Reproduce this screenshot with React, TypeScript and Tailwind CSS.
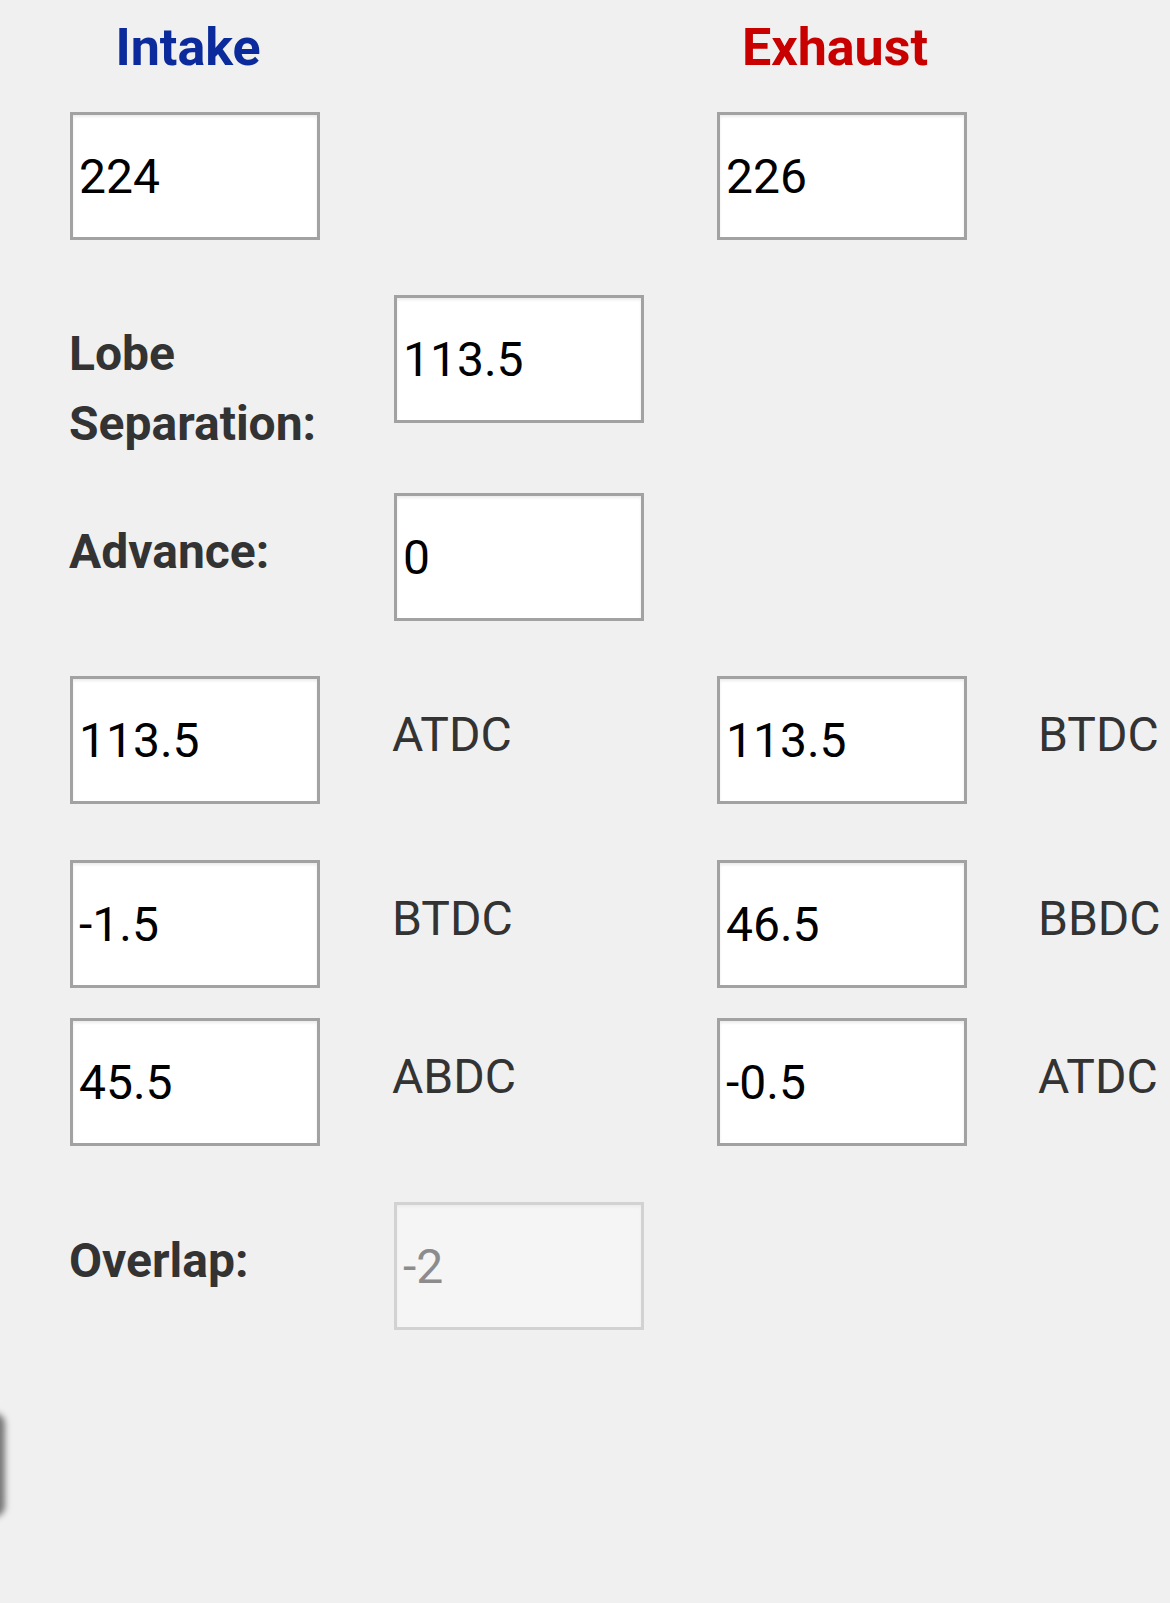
import React from "react";

const GRID = "grid grid-cols-[324px_323px_323px_1fr]";

function Box({ value, disabled = false }: { value: string; disabled?: boolean }) {
  return (
    <input
      readOnly
      disabled={disabled}
      value={value}
      className={
        disabled
          ? "block w-[250px] h-[128px] border-[3px] border-[#d2d2d2] bg-[#f5f5f5] px-[6px] text-[48px] text-[#8c8c8c] font-['Roboto'] outline-none shadow-[inset_0_2px_3px_rgba(0,0,0,0.04)]"
          : "block w-[250px] h-[128px] border-[3px] border-[#a2a2a2] bg-white px-[6px] text-[48px] text-black font-['Roboto'] outline-none shadow-[inset_0_2px_3px_rgba(0,0,0,0.08)]"
      }
    />
  );
}

function Label({ children }: { children: React.ReactNode }) {
  return (
    <div className="-ml-[1px] pt-[24px] text-[48px] leading-[70px] font-bold text-[#333333]">{children}</div>
  );
}

function Unit({ children }: { children: React.ReactNode }) {
  return (
    <div className="-ml-[2px] pt-[24px] text-[48px] leading-[70px] text-[#333333] whitespace-nowrap">{children}</div>
  );
}

export default function App() {
  return (
    <div className="relative min-h-[1603px] w-full overflow-hidden bg-[#f0f0f0] pl-[70px] font-['Roboto',sans-serif]">
      {/* Header */}
      <div className={`${GRID} pt-[22px]`}>
        <div className="-ml-[2px] w-[240px] text-center text-[52px] leading-[52px] font-bold text-[#0b2b9c]">Intake</div>
        <div />
        <div className="-ml-[2px] w-[240px] text-center text-[52px] leading-[52px] font-bold text-[#c80000]">Exhaust</div>
        <div />
      </div>

      {/* Duration */}
      <div className={`${GRID} mt-[38px] items-start`}>
        <Box value="224" />
        <div />
        <Box value="226" />
        <div />
      </div>

      {/* Lobe Separation */}
      <div className={`${GRID} mt-[55px] items-start`}>
        <Label>Lobe Separation:</Label>
        <Box value="113.5" />
        <div />
        <div />
      </div>

      {/* Advance */}
      <div className={`${GRID} mt-[34px] items-start`}>
        <Label>Advance:</Label>
        <Box value="0" />
        <div />
        <div />
      </div>

      {/* Centerlines */}
      <div className={`${GRID} mt-[55px] items-start`}>
        <Box value="113.5" />
        <Unit>ATDC</Unit>
        <Box value="113.5" />
        <Unit>BTDC</Unit>
      </div>

      {/* Opening */}
      <div className={`${GRID} mt-[56px] items-start`}>
        <Box value="-1.5" />
        <Unit>BTDC</Unit>
        <Box value="46.5" />
        <Unit>BBDC</Unit>
      </div>

      {/* Closing */}
      <div className={`${GRID} mt-[30px] items-start`}>
        <Box value="45.5" />
        <Unit>ABDC</Unit>
        <Box value="-0.5" />
        <Unit>ATDC</Unit>
      </div>

      {/* Overlap */}
      <div className={`${GRID} mt-[56px] items-start`}>
        <Label>Overlap:</Label>
        <Box value="-2" disabled />
        <div />
        <div />
      </div>

      {/* Partially off-screen floating element at left edge */}
      <div className="absolute left-[-18px] top-[1413px] h-[104px] w-[23px] rounded-[11px] bg-[#777777] blur-[3px]" />
    </div>
  );
}
